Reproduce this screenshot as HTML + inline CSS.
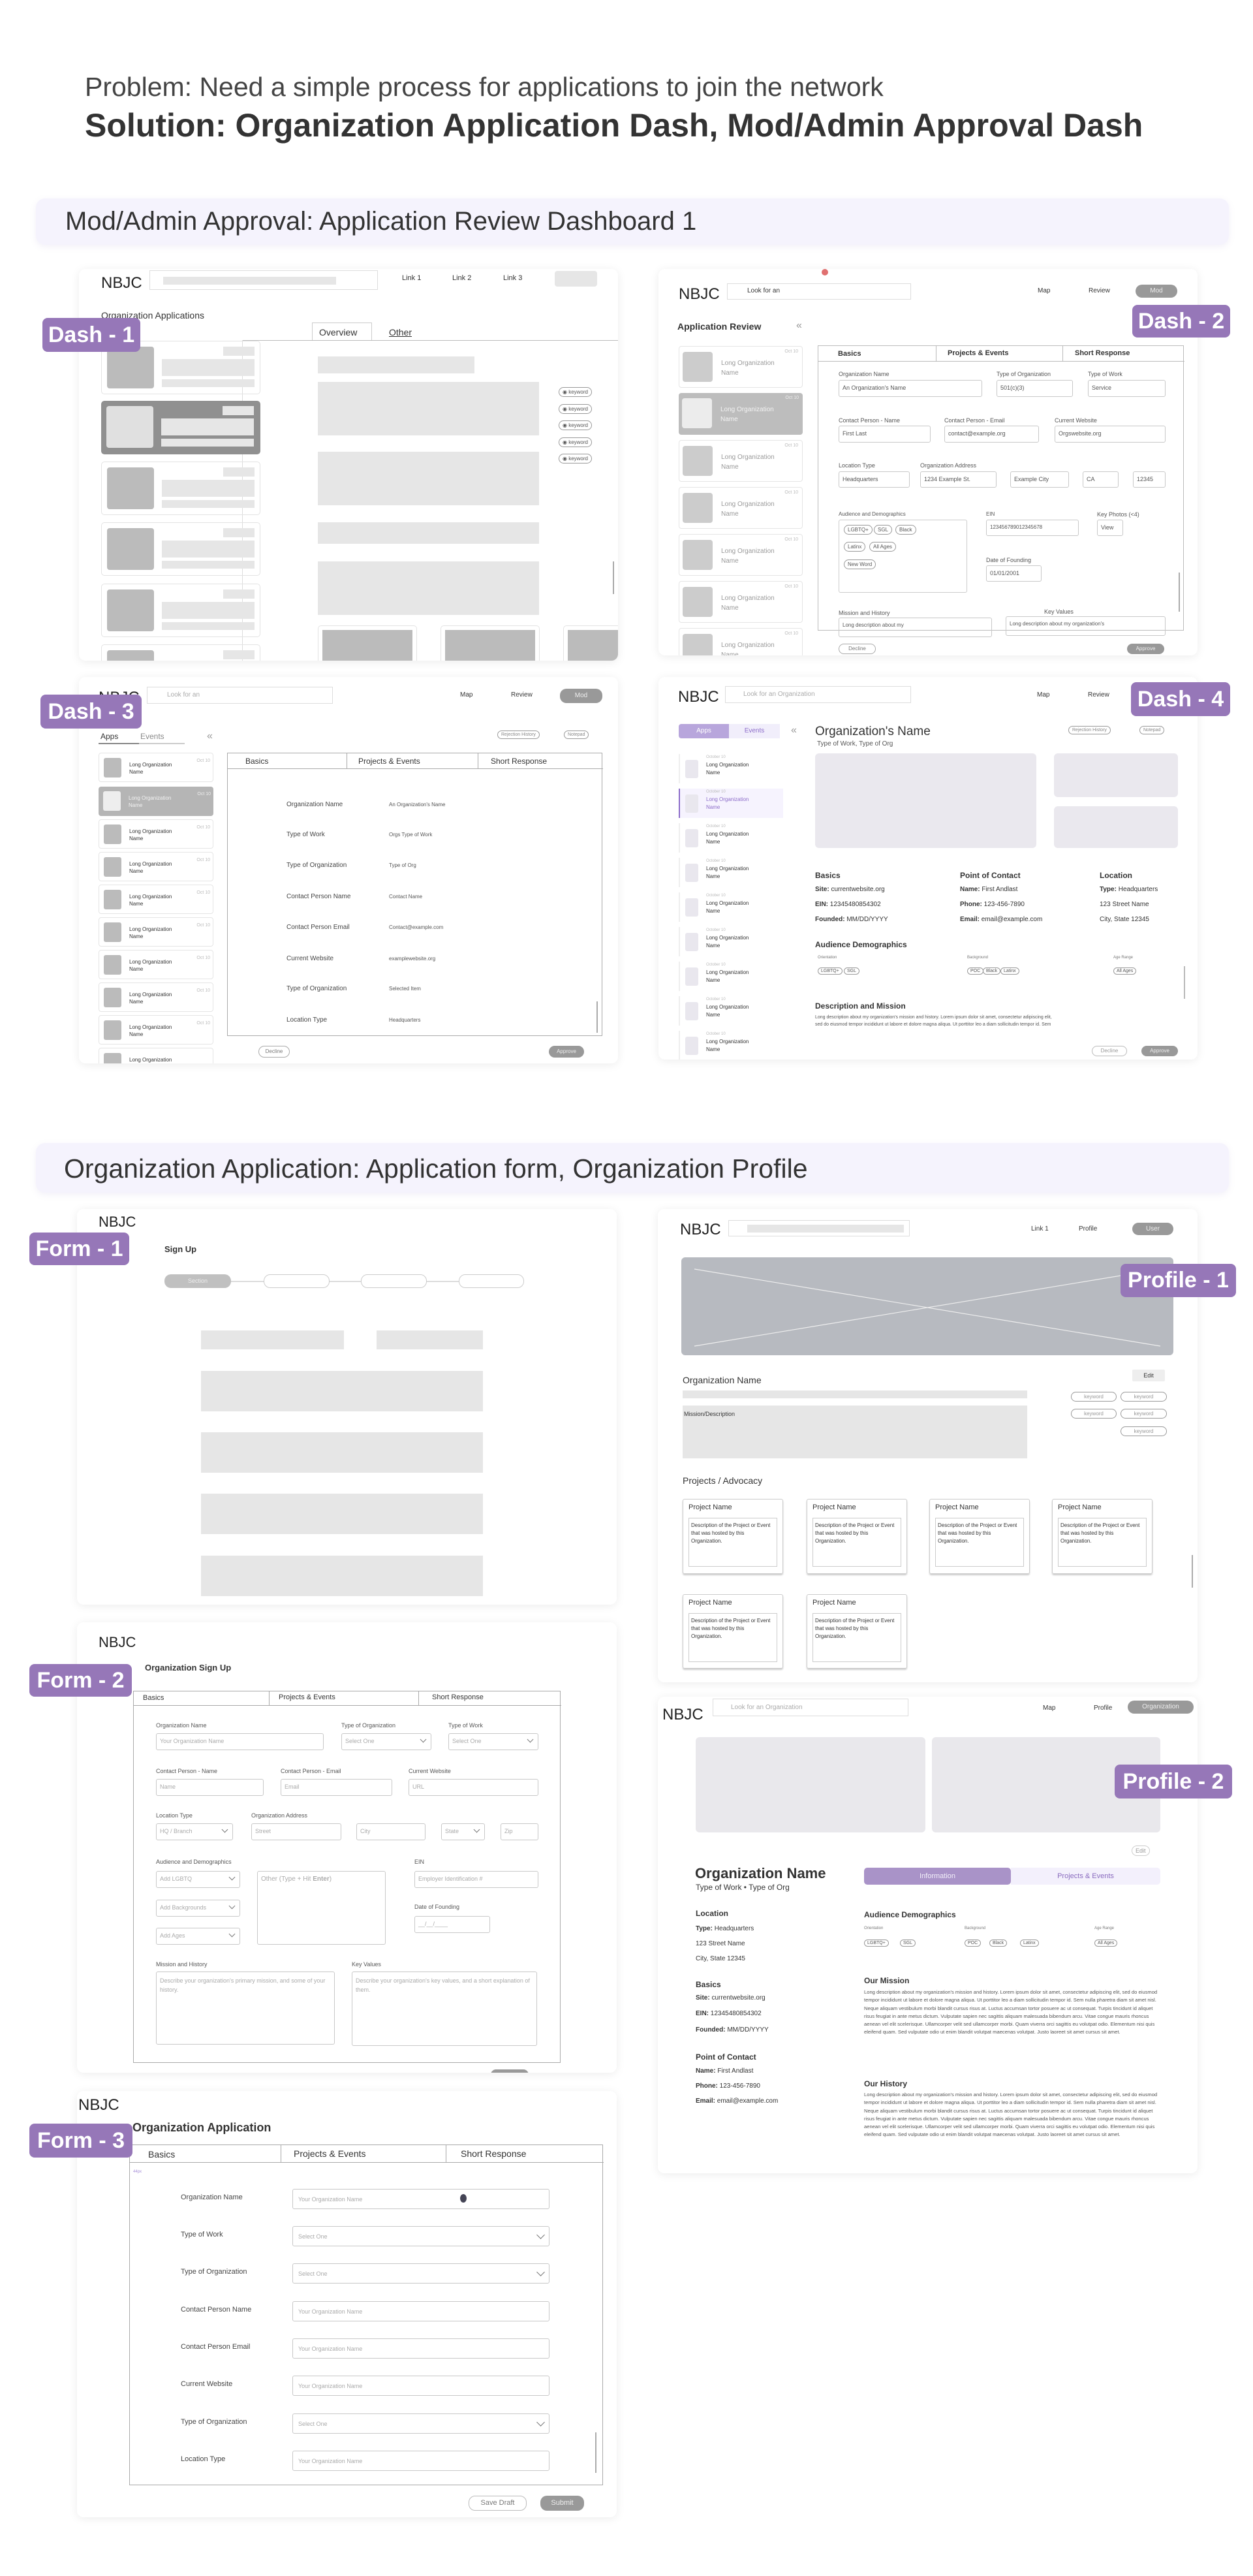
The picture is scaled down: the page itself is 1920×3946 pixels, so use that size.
<!DOCTYPE html>
<html><head><meta charset="utf-8">
<style>
*{box-sizing:border-box;margin:0;padding:0}
body{width:1920px;height:3946px;background:#fff;position:relative;font-family:"Liberation Sans",sans-serif;color:#333;overflow:hidden}
.a{position:absolute}
.card{position:absolute;background:#fff;border-radius:10px;box-shadow:0 2px 14px rgba(0,0,0,.08);overflow:hidden}
.lab{position:absolute;background:#9677b8;color:#fff;font-weight:bold;font-size:34px;border-radius:8px;text-align:center;white-space:nowrap}
.ban{position:absolute;left:55px;width:1828px;background:#f5f3fd;border-radius:14px;box-shadow:0 3px 10px rgba(150,130,200,.12)}
.g{background:#e6e6e6}
.inp{position:absolute;border:1px solid #c8c8c8;border-radius:3px;font-size:9px;color:#aaa;padding:6px 5px;white-space:nowrap;overflow:hidden}
.t{position:absolute;white-space:nowrap}
.pill{position:absolute;border:1px solid #999;border-radius:10px;font-size:9px;color:#555;padding:2px 5px;white-space:nowrap}
.btn{position:absolute;border-radius:10px;font-size:10px;text-align:center;white-space:nowrap}
.nb{position:absolute;font-size:24px;color:#222}
.chev{position:absolute;right:8px;top:5px;width:7px;height:7px;border-right:1px solid #777;border-bottom:1px solid #777;transform:rotate(45deg)}
</style></head><body>

<div class="t" style="left:130px;top:110px;font-size:41px;color:#444">Problem: Need a simple process for applications to join the network</div>
<div class="t" style="left:130px;top:163px;font-size:50px;font-weight:bold;color:#333">Solution: Organization Application Dash, Mod/Admin Approval Dash</div>

<div class="ban" style="top:304px;height:71px"><div class="t" style="left:45px;top:13px;font-size:40px;color:#333">Mod/Admin Approval: Application Review Dashboard 1</div></div>

<!-- DASH 1 -->
<div class="card" style="left:121px;top:412px;width:826px;height:600px">
 <div class="nb" style="left:34px;top:8px">NBJC</div>
 <div class="a" style="left:108px;top:2px;width:350px;height:30px;border:1px solid #ddd"><div class="a g" style="left:20px;top:9px;width:265px;height:12px"></div></div>
 <div class="t" style="left:495px;top:8px;font-size:11px">Link 1</div><div class="t" style="left:572px;top:8px;font-size:11px">Link 2</div><div class="t" style="left:650px;top:8px;font-size:11px">Link 3</div>
 <div class="a g" style="left:729px;top:3px;width:65px;height:24px;border-radius:4px"></div>
 <div class="t" style="left:34px;top:63px;font-size:14px">Organization Applications</div>
 <div class="a" style="left:357px;top:82px;width:92px;height:28px;border:1px solid #ccc;border-bottom:none;font-size:14px;padding:6px 10px">Overview</div>
 <div class="t" style="left:475px;top:89px;font-size:14px;text-decoration:underline">Other</div>
 <div class="a" style="left:250px;top:109px;width:580px;border-top:1px solid #bbb"></div>
 <div class="a" style="left:250px;top:109px;height:500px;border-left:1px solid #ddd"></div>
 <div class="a" style="left:34px;top:110px;width:244px;height:82px;border:1px solid #e3e3e3;border-radius:5px"><div class="a" style="left:8px;top:8px;width:72px;height:64px;background:#bbb;border-radius:4px"></div><div class="a g" style="left:186px;top:8px;width:48px;height:14px"></div><div class="a g" style="left:92px;top:27px;width:142px;height:26px"></div><div class="a g" style="left:92px;top:58px;width:142px;height:12px"></div></div>
 <div class="a" style="left:34px;top:202px;width:244px;height:82px;background:#909090;border-radius:5px"><div class="a" style="left:8px;top:8px;width:72px;height:64px;background:#e0e0e0;border-radius:4px"></div><div class="a" style="left:186px;top:8px;width:48px;height:14px;background:#e6e6e6"></div><div class="a" style="left:92px;top:27px;width:142px;height:26px;background:#e6e6e6"></div><div class="a" style="left:92px;top:58px;width:142px;height:12px;background:#e6e6e6"></div></div>
 <div class="a" style="left:34px;top:295px;width:244px;height:82px;border:1px solid #e3e3e3;border-radius:5px"><div class="a" style="left:8px;top:8px;width:72px;height:64px;background:#bbb;border-radius:4px"></div><div class="a g" style="left:186px;top:8px;width:48px;height:14px"></div><div class="a g" style="left:92px;top:27px;width:142px;height:26px"></div><div class="a g" style="left:92px;top:58px;width:142px;height:12px"></div></div>
 <div class="a" style="left:34px;top:388px;width:244px;height:82px;border:1px solid #e3e3e3;border-radius:5px"><div class="a" style="left:8px;top:8px;width:72px;height:64px;background:#bbb;border-radius:4px"></div><div class="a g" style="left:186px;top:8px;width:48px;height:14px"></div><div class="a g" style="left:92px;top:27px;width:142px;height:26px"></div><div class="a g" style="left:92px;top:58px;width:142px;height:12px"></div></div>
 <div class="a" style="left:34px;top:482px;width:244px;height:82px;border:1px solid #e3e3e3;border-radius:5px"><div class="a" style="left:8px;top:8px;width:72px;height:64px;background:#bbb;border-radius:4px"></div><div class="a g" style="left:186px;top:8px;width:48px;height:14px"></div><div class="a g" style="left:92px;top:27px;width:142px;height:26px"></div><div class="a g" style="left:92px;top:58px;width:142px;height:12px"></div></div>
 <div class="a" style="left:34px;top:575px;width:244px;height:82px;border:1px solid #e3e3e3;border-radius:5px"><div class="a" style="left:8px;top:8px;width:72px;height:64px;background:#bbb;border-radius:4px"></div><div class="a g" style="left:186px;top:8px;width:48px;height:14px"></div></div>
 <div class="a g" style="left:366px;top:134px;width:240px;height:26px"></div>
 <div class="a g" style="left:366px;top:173px;width:339px;height:82px"></div>
 <div class="a g" style="left:366px;top:280px;width:339px;height:82px"></div>
 <div class="a g" style="left:366px;top:388px;width:339px;height:33px"></div>
 <div class="a g" style="left:366px;top:448px;width:339px;height:82px"></div>
 <div class="a" style="left:366px;top:546px;width:152px;height:70px;border:1px solid #e3e3e3;border-radius:5px"><div class="a" style="left:6px;top:6px;width:138px;height:60px;background:#bbb"></div></div>
 <div class="a" style="left:554px;top:546px;width:152px;height:70px;border:1px solid #e3e3e3;border-radius:5px"><div class="a" style="left:6px;top:6px;width:138px;height:60px;background:#bbb"></div></div>
 <div class="a" style="left:742px;top:546px;width:152px;height:70px;border:1px solid #e3e3e3;border-radius:5px"><div class="a" style="left:6px;top:6px;width:138px;height:60px;background:#bbb"></div></div>
 <div class="pill" style="left:735px;top:181px;font-size:8px">◉ keyword</div>
 <div class="pill" style="left:735px;top:207px;font-size:8px">◉ keyword</div>
 <div class="pill" style="left:735px;top:232px;font-size:8px">◉ keyword</div>
 <div class="pill" style="left:735px;top:258px;font-size:8px">◉ keyword</div>
 <div class="pill" style="left:735px;top:283px;font-size:8px">◉ keyword</div>
 <div class="a" style="left:818px;top:448px;width:2px;height:50px;background:#aaa"></div>
</div>
<div class="lab" style="left:65px;top:487px;width:150px;height:52px;line-height:52px">Dash - 1</div>

<!-- DASH 2 -->
<div class="card" style="left:1009px;top:412px;width:826px;height:592px">
 <div class="nb" style="left:31px;top:25px">NBJC</div>
 <div class="a" style="left:105px;top:22px;width:282px;height:25px;border:1px solid #ddd;font-size:10px;padding:5px 30px">Look for an</div>
 <div class="a" style="left:250px;top:0px;width:10px;height:10px;border-radius:50%;background:#e07070"></div>
 <div class="t" style="left:581px;top:28px;font-size:10px">Map</div><div class="t" style="left:659px;top:28px;font-size:10px">Review</div>
 <div class="btn" style="left:731px;top:24px;width:64px;height:20px;background:#999;color:#eee;line-height:20px">Mod</div>
 <div class="t" style="left:29px;top:80px;font-size:14px;font-weight:bold">Application Review</div>
 <div class="t" style="left:211px;top:78px;font-size:16px;color:#999">«</div>
 <div class="a" style="left:31px;top:118px;width:190px;height:64px;border:1px solid #e5e5e5;border-radius:4px"><div class="a" style="left:5px;top:8px;width:46px;height:46px;background:#ccc;border-radius:4px"></div><div class="t" style="left:64px;top:18px;font-size:10px;color:#999;line-height:15px">Long Organization<br>Name</div><div class="t" style="right:6px;top:4px;font-size:7px;color:#bbb">Oct 10</div></div>
 <div class="a" style="left:31px;top:190px;width:190px;height:64px;background:#bdbdbd;border-radius:4px"><div class="a" style="left:5px;top:8px;width:46px;height:46px;background:#ececec;border-radius:4px"></div><div class="t" style="left:64px;top:18px;font-size:10px;color:#f3f3f3;line-height:15px">Long Organization<br>Name</div><div class="t" style="right:6px;top:4px;font-size:7px;color:#eee">Oct 10</div></div>
 <div class="a" style="left:31px;top:262px;width:190px;height:64px;border:1px solid #e5e5e5;border-radius:4px"><div class="a" style="left:5px;top:8px;width:46px;height:46px;background:#ccc;border-radius:4px"></div><div class="t" style="left:64px;top:18px;font-size:10px;color:#999;line-height:15px">Long Organization<br>Name</div><div class="t" style="right:6px;top:4px;font-size:7px;color:#bbb">Oct 10</div></div>
 <div class="a" style="left:31px;top:334px;width:190px;height:64px;border:1px solid #e5e5e5;border-radius:4px"><div class="a" style="left:5px;top:8px;width:46px;height:46px;background:#ccc;border-radius:4px"></div><div class="t" style="left:64px;top:18px;font-size:10px;color:#999;line-height:15px">Long Organization<br>Name</div><div class="t" style="right:6px;top:4px;font-size:7px;color:#bbb">Oct 10</div></div>
 <div class="a" style="left:31px;top:406px;width:190px;height:64px;border:1px solid #e5e5e5;border-radius:4px"><div class="a" style="left:5px;top:8px;width:46px;height:46px;background:#ccc;border-radius:4px"></div><div class="t" style="left:64px;top:18px;font-size:10px;color:#999;line-height:15px">Long Organization<br>Name</div><div class="t" style="right:6px;top:4px;font-size:7px;color:#bbb">Oct 10</div></div>
 <div class="a" style="left:31px;top:478px;width:190px;height:64px;border:1px solid #e5e5e5;border-radius:4px"><div class="a" style="left:5px;top:8px;width:46px;height:46px;background:#ccc;border-radius:4px"></div><div class="t" style="left:64px;top:18px;font-size:10px;color:#999;line-height:15px">Long Organization<br>Name</div><div class="t" style="right:6px;top:4px;font-size:7px;color:#bbb">Oct 10</div></div>
 <div class="a" style="left:31px;top:550px;width:190px;height:64px;border:1px solid #e5e5e5;border-radius:4px"><div class="a" style="left:5px;top:8px;width:46px;height:46px;background:#ccc;border-radius:4px"></div><div class="t" style="left:64px;top:18px;font-size:10px;color:#999;line-height:15px">Long Organization<br>Name</div><div class="t" style="right:6px;top:4px;font-size:7px;color:#bbb">Oct 10</div></div>
 <div class="a" style="left:244px;top:117px;width:561px;height:437px;border:1px solid #bbb">
  <div class="a" style="left:0;top:0;width:561px;height:24px;border-bottom:1px solid #bbb"></div>
  <div class="a" style="left:180px;top:0;height:24px;border-left:1px solid #bbb"></div>
  <div class="a" style="left:374px;top:0;height:24px;border-left:1px solid #bbb"></div>
  <div class="t" style="left:30px;top:6px;font-size:11px;font-weight:bold">Basics</div>
  <div class="t" style="left:198px;top:5px;font-size:11px;font-weight:bold">Projects &amp; Events</div>
  <div class="t" style="left:393px;top:5px;font-size:11px;font-weight:bold">Short Response</div>
 </div>
 <div class="t" style="left:276px;top:156px;font-size:9px;color:#555">Organization Name</div>
 <div class="t" style="left:518px;top:156px;font-size:9px;color:#555">Type of Organization</div>
 <div class="t" style="left:658px;top:156px;font-size:9px;color:#555">Type of Work</div>
 <div class="inp" style="left:276px;top:170px;width:220px;height:26px;color:#555">An Organization's Name</div>
 <div class="inp" style="left:518px;top:170px;width:117px;height:26px;color:#555">501(c)(3)</div>
 <div class="inp" style="left:658px;top:170px;width:119px;height:26px;color:#555">Service</div>
 <div class="t" style="left:276px;top:227px;font-size:9px;color:#555">Contact Person - Name</div>
 <div class="t" style="left:438px;top:227px;font-size:9px;color:#555">Contact Person - Email</div>
 <div class="t" style="left:607px;top:227px;font-size:9px;color:#555">Current Website</div>
 <div class="inp" style="left:276px;top:240px;width:141px;height:26px;color:#555">First Last</div>
 <div class="inp" style="left:438px;top:240px;width:145px;height:26px;color:#555">contact@example.org</div>
 <div class="inp" style="left:607px;top:240px;width:170px;height:26px;color:#555">Orgswebsite.org</div>
 <div class="t" style="left:276px;top:296px;font-size:9px;color:#555">Location Type</div>
 <div class="t" style="left:401px;top:296px;font-size:9px;color:#555">Organization Address</div>
 <div class="inp" style="left:276px;top:310px;width:109px;height:25px;color:#555">Headquarters</div>
 <div class="inp" style="left:401px;top:310px;width:117px;height:25px;color:#555">1234 Example St.</div>
 <div class="inp" style="left:539px;top:310px;width:90px;height:25px;color:#555">Example City</div>
 <div class="inp" style="left:650px;top:310px;width:55px;height:25px;color:#555">CA</div>
 <div class="inp" style="left:727px;top:310px;width:50px;height:25px;color:#555">12345</div>
 <div class="t" style="left:276px;top:371px;font-size:8px;color:#555">Audience and Demographics</div>
 <div class="t" style="left:502px;top:371px;font-size:8px;color:#555">EIN</div>
 <div class="t" style="left:672px;top:371px;font-size:9px;color:#555">Key Photos (&lt;4)</div>
 <div class="a" style="left:276px;top:384px;width:197px;height:112px;border:1px solid #ccc;border-radius:3px"></div>
 <div class="pill" style="left:284px;top:392px;font-size:8px">LGBTQ+</div><div class="pill" style="left:330px;top:392px;font-size:8px">SGL</div><div class="pill" style="left:363px;top:392px;font-size:8px">Black</div>
 <div class="pill" style="left:284px;top:418px;font-size:8px">Latinx</div><div class="pill" style="left:323px;top:418px;font-size:8px">All Ages</div>
 <div class="pill" style="left:284px;top:445px;font-size:8px">New Word</div>
 <div class="inp" style="left:502px;top:384px;width:142px;height:25px;color:#555;font-size:8px">123456789012345678</div>
 <div class="inp" style="left:672px;top:384px;width:40px;height:25px;color:#555">View</div>
 <div class="t" style="left:502px;top:441px;font-size:9px;color:#555">Date of Founding</div>
 <div class="inp" style="left:502px;top:454px;width:85px;height:25px;color:#555">01/01/2001</div>
 <div class="t" style="left:276px;top:522px;font-size:9px;color:#555">Mission and History</div>
 <div class="t" style="left:591px;top:520px;font-size:9px;color:#555">Key Values</div>
 <div class="inp" style="left:276px;top:534px;width:235px;height:30px;color:#555;font-size:8px">Long description about my</div>
 <div class="inp" style="left:532px;top:532px;width:245px;height:30px;color:#555;font-size:8px">Long description about my organization's</div>
 <div class="a" style="left:797px;top:465px;width:2px;height:60px;background:#aaa"></div>
 <div class="btn" style="left:276px;top:574px;width:57px;height:16px;border:1px solid #aaa;font-size:8px;color:#777;line-height:14px">Decline</div>
 <div class="btn" style="left:718px;top:574px;width:57px;height:16px;background:#999;color:#eee;font-size:8px;line-height:16px">Approve</div>
</div>
<div class="lab" style="left:1735px;top:467px;width:150px;height:50px;line-height:50px">Dash - 2</div>

<!-- DASH 3 -->
<div class="card" style="left:121px;top:1037px;width:826px;height:592px">
 <div class="nb" style="left:30px;top:18px">NBJC</div>
 <div class="a" style="left:104px;top:15px;width:285px;height:26px;border:1px solid #ddd;font-size:10px;color:#aaa;padding:6px 30px">Look for an</div>
 <div class="t" style="left:584px;top:22px;font-size:10px">Map</div><div class="t" style="left:662px;top:22px;font-size:10px">Review</div>
 <div class="btn" style="left:737px;top:18px;width:65px;height:22px;background:#999;color:#eee;line-height:22px">Mod</div>
 <div class="t" style="left:33px;top:84px;font-size:12px">Apps</div><div class="t" style="left:94px;top:84px;font-size:12px;color:#888">Events</div>
 <div class="a" style="left:30px;top:101px;width:132px;border-top:2px solid #ccc"></div><div class="a" style="left:30px;top:101px;width:62px;border-top:2px solid #888"></div>
 <div class="t" style="left:196px;top:82px;font-size:16px;color:#999">«</div>
 <div class="pill" style="left:641px;top:82px;font-size:7px;color:#888">Rejection History</div>
 <div class="pill" style="left:743px;top:82px;font-size:7px;color:#888">Notepad</div>
 <div class="a" style="left:30px;top:116px;width:176px;height:45px;border:1px solid #e5e5e5;border-radius:4px"><div class="a" style="left:7px;top:7px;width:27px;height:30px;background:#bbb;border-radius:3px"></div><div class="t" style="left:46px;top:12px;font-size:8px;line-height:11px">Long Organization<br>Name</div><div class="t" style="right:4px;top:8px;font-size:7px;color:#bbb">Oct 10</div></div>
 <div class="a" style="left:30px;top:168px;width:176px;height:45px;background:#b5b5b5;border-radius:4px"><div class="a" style="left:7px;top:7px;width:27px;height:30px;background:#eee;border-radius:3px"></div><div class="t" style="left:46px;top:12px;font-size:8px;line-height:11px;color:#f3f3f3">Long Organization<br>Name</div><div class="t" style="right:4px;top:8px;font-size:7px;color:#eee">Oct 10</div></div>
 <div class="a" style="left:30px;top:218px;width:176px;height:45px;border:1px solid #e5e5e5;border-radius:4px"><div class="a" style="left:7px;top:7px;width:27px;height:30px;background:#bbb;border-radius:3px"></div><div class="t" style="left:46px;top:12px;font-size:8px;line-height:11px">Long Organization<br>Name</div><div class="t" style="right:4px;top:8px;font-size:7px;color:#bbb">Oct 10</div></div>
 <div class="a" style="left:30px;top:268px;width:176px;height:45px;border:1px solid #e5e5e5;border-radius:4px"><div class="a" style="left:7px;top:7px;width:27px;height:30px;background:#bbb;border-radius:3px"></div><div class="t" style="left:46px;top:12px;font-size:8px;line-height:11px">Long Organization<br>Name</div><div class="t" style="right:4px;top:8px;font-size:7px;color:#bbb">Oct 10</div></div>
 <div class="a" style="left:30px;top:318px;width:176px;height:45px;border:1px solid #e5e5e5;border-radius:4px"><div class="a" style="left:7px;top:7px;width:27px;height:30px;background:#bbb;border-radius:3px"></div><div class="t" style="left:46px;top:12px;font-size:8px;line-height:11px">Long Organization<br>Name</div><div class="t" style="right:4px;top:8px;font-size:7px;color:#bbb">Oct 10</div></div>
 <div class="a" style="left:30px;top:368px;width:176px;height:45px;border:1px solid #e5e5e5;border-radius:4px"><div class="a" style="left:7px;top:7px;width:27px;height:30px;background:#bbb;border-radius:3px"></div><div class="t" style="left:46px;top:12px;font-size:8px;line-height:11px">Long Organization<br>Name</div><div class="t" style="right:4px;top:8px;font-size:7px;color:#bbb">Oct 10</div></div>
 <div class="a" style="left:30px;top:418px;width:176px;height:45px;border:1px solid #e5e5e5;border-radius:4px"><div class="a" style="left:7px;top:7px;width:27px;height:30px;background:#bbb;border-radius:3px"></div><div class="t" style="left:46px;top:12px;font-size:8px;line-height:11px">Long Organization<br>Name</div><div class="t" style="right:4px;top:8px;font-size:7px;color:#bbb">Oct 10</div></div>
 <div class="a" style="left:30px;top:468px;width:176px;height:45px;border:1px solid #e5e5e5;border-radius:4px"><div class="a" style="left:7px;top:7px;width:27px;height:30px;background:#bbb;border-radius:3px"></div><div class="t" style="left:46px;top:12px;font-size:8px;line-height:11px">Long Organization<br>Name</div><div class="t" style="right:4px;top:8px;font-size:7px;color:#bbb">Oct 10</div></div>
 <div class="a" style="left:30px;top:518px;width:176px;height:45px;border:1px solid #e5e5e5;border-radius:4px"><div class="a" style="left:7px;top:7px;width:27px;height:30px;background:#bbb;border-radius:3px"></div><div class="t" style="left:46px;top:12px;font-size:8px;line-height:11px">Long Organization<br>Name</div><div class="t" style="right:4px;top:8px;font-size:7px;color:#bbb">Oct 10</div></div>
 <div class="a" style="left:30px;top:568px;width:176px;height:45px;border:1px solid #e5e5e5;border-radius:4px"><div class="a" style="left:7px;top:7px;width:27px;height:30px;background:#bbb;border-radius:3px"></div><div class="t" style="left:46px;top:12px;font-size:8px;line-height:11px">Long Organization<br>Name</div></div>
 <div class="a" style="left:227px;top:116px;width:575px;height:434px;border:1px solid #aaa">
  <div class="a" style="left:0;top:0;width:575px;height:24px;border-bottom:1px solid #aaa"></div>
  <div class="a" style="left:182px;top:0;height:24px;border-left:1px solid #aaa"></div>
  <div class="a" style="left:383px;top:0;height:24px;border-left:1px solid #aaa"></div>
  <div class="t" style="left:27px;top:5px;font-size:12px">Basics</div>
  <div class="t" style="left:200px;top:5px;font-size:12px">Projects &amp; Events</div>
  <div class="t" style="left:403px;top:5px;font-size:12px">Short Response</div>
  <div class="a" style="left:565px;top:380px;width:2px;height:48px;background:#aaa"></div>
 </div>
 <div class="t" style="left:318px;top:190px;font-size:10px;color:#444">Organization Name</div><div class="t" style="left:475px;top:191px;font-size:8px;color:#555">An Organization's Name</div>
 <div class="t" style="left:318px;top:236px;font-size:10px;color:#444">Type of Work</div><div class="t" style="left:475px;top:237px;font-size:8px;color:#555">Orgs Type of Work</div>
 <div class="t" style="left:318px;top:283px;font-size:10px;color:#444">Type of Organization</div><div class="t" style="left:475px;top:284px;font-size:8px;color:#555">Type of Org</div>
 <div class="t" style="left:318px;top:331px;font-size:10px;color:#444">Contact Person Name</div><div class="t" style="left:475px;top:332px;font-size:8px;color:#555">Contact Name</div>
 <div class="t" style="left:318px;top:378px;font-size:10px;color:#444">Contact Person Email</div><div class="t" style="left:475px;top:379px;font-size:8px;color:#555">Contact@example.com</div>
 <div class="t" style="left:318px;top:426px;font-size:10px;color:#444">Current Website</div><div class="t" style="left:475px;top:427px;font-size:8px;color:#555">examplewebsite.org</div>
 <div class="t" style="left:318px;top:472px;font-size:10px;color:#444">Type of Organization</div><div class="t" style="left:475px;top:473px;font-size:8px;color:#555">Selected Item</div>
 <div class="t" style="left:318px;top:520px;font-size:10px;color:#444">Location Type</div><div class="t" style="left:475px;top:521px;font-size:8px;color:#555">Headquarters</div>
 <div class="btn" style="left:275px;top:565px;width:48px;height:18px;border:1px solid #aaa;font-size:8px;color:#777;line-height:16px">Decline</div>
 <div class="btn" style="left:720px;top:565px;width:54px;height:18px;background:#999;color:#eee;font-size:8px;line-height:18px">Approve</div>
</div>
<div class="lab" style="left:62px;top:1064px;width:155px;height:52px;line-height:52px">Dash - 3</div>

<!-- DASH 4 -->
<div class="card" style="left:1009px;top:1037px;width:826px;height:586px">
 <div class="nb" style="left:30px;top:17px">NBJC</div>
 <div class="a" style="left:102px;top:14px;width:285px;height:26px;border:1px solid #ddd;font-size:10px;color:#aaa;padding:6px 27px">Look for an Organization</div>
 <div class="t" style="left:580px;top:22px;font-size:10px">Map</div><div class="t" style="left:658px;top:22px;font-size:10px">Review</div>
 <div class="a" style="left:31px;top:72px;width:77px;height:22px;background:#b8a6dc;border-radius:4px 0 0 4px;color:#fff;font-size:10px;text-align:center;line-height:22px">Apps</div>
 <div class="a" style="left:108px;top:72px;width:78px;height:22px;background:#f1eefb;color:#8c6cc9;font-size:10px;text-align:center;line-height:22px">Events</div>
 <div class="t" style="left:203px;top:73px;font-size:16px;color:#999">«</div>
 <div class="t" style="left:240px;top:73px;font-size:19px;color:#333">Organization's Name</div>
 <div class="t" style="left:243px;top:97px;font-size:10px;color:#555">Type of Work, Type of Org</div>
 <div class="pill" style="left:628px;top:75px;font-size:7px;color:#888">Rejection History</div>
 <div class="pill" style="left:737px;top:75px;font-size:7px;color:#888">Notepad</div>
 <div class="a" style="left:31px;top:118px;width:160px;height:45px;border-left:2px solid #eee"><div class="a" style="left:8px;top:9px;width:20px;height:28px;background:#e9e7ee;border-radius:3px"></div><div class="t" style="left:40px;top:2px;font-size:6px;color:#bbb">October 10</div><div class="t" style="left:40px;top:11px;font-size:8px;line-height:12px">Long Organization<br>Name</div></div>
 <div class="a" style="left:31px;top:171px;width:160px;height:45px;border-left:2px solid #8c6cc9;background:#f6f3fe"><div class="a" style="left:8px;top:9px;width:20px;height:28px;background:#e9e7ee;border-radius:3px"></div><div class="t" style="left:40px;top:2px;font-size:6px;color:#bbb">October 10</div><div class="t" style="left:40px;top:11px;font-size:8px;line-height:12px;color:#8c6cc9">Long Organization<br>Name</div></div>
 <div class="a" style="left:31px;top:224px;width:160px;height:45px;border-left:2px solid #eee"><div class="a" style="left:8px;top:9px;width:20px;height:28px;background:#e9e7ee;border-radius:3px"></div><div class="t" style="left:40px;top:2px;font-size:6px;color:#bbb">October 10</div><div class="t" style="left:40px;top:11px;font-size:8px;line-height:12px">Long Organization<br>Name</div></div>
 <div class="a" style="left:31px;top:277px;width:160px;height:45px;border-left:2px solid #eee"><div class="a" style="left:8px;top:9px;width:20px;height:28px;background:#e9e7ee;border-radius:3px"></div><div class="t" style="left:40px;top:2px;font-size:6px;color:#bbb">October 10</div><div class="t" style="left:40px;top:11px;font-size:8px;line-height:12px">Long Organization<br>Name</div></div>
 <div class="a" style="left:31px;top:330px;width:160px;height:45px;border-left:2px solid #eee"><div class="a" style="left:8px;top:9px;width:20px;height:28px;background:#e9e7ee;border-radius:3px"></div><div class="t" style="left:40px;top:2px;font-size:6px;color:#bbb">October 10</div><div class="t" style="left:40px;top:11px;font-size:8px;line-height:12px">Long Organization<br>Name</div></div>
 <div class="a" style="left:31px;top:383px;width:160px;height:45px;border-left:2px solid #eee"><div class="a" style="left:8px;top:9px;width:20px;height:28px;background:#e9e7ee;border-radius:3px"></div><div class="t" style="left:40px;top:2px;font-size:6px;color:#bbb">October 10</div><div class="t" style="left:40px;top:11px;font-size:8px;line-height:12px">Long Organization<br>Name</div></div>
 <div class="a" style="left:31px;top:436px;width:160px;height:45px;border-left:2px solid #eee"><div class="a" style="left:8px;top:9px;width:20px;height:28px;background:#e9e7ee;border-radius:3px"></div><div class="t" style="left:40px;top:2px;font-size:6px;color:#bbb">October 10</div><div class="t" style="left:40px;top:11px;font-size:8px;line-height:12px">Long Organization<br>Name</div></div>
 <div class="a" style="left:31px;top:489px;width:160px;height:45px;border-left:2px solid #eee"><div class="a" style="left:8px;top:9px;width:20px;height:28px;background:#e9e7ee;border-radius:3px"></div><div class="t" style="left:40px;top:2px;font-size:6px;color:#bbb">October 10</div><div class="t" style="left:40px;top:11px;font-size:8px;line-height:12px">Long Organization<br>Name</div></div>
 <div class="a" style="left:31px;top:542px;width:160px;height:45px;border-left:2px solid #eee"><div class="a" style="left:8px;top:9px;width:20px;height:28px;background:#e9e7ee;border-radius:3px"></div><div class="t" style="left:40px;top:2px;font-size:6px;color:#bbb">October 10</div><div class="t" style="left:40px;top:11px;font-size:8px;line-height:12px">Long Organization<br>Name</div></div>
 <div class="a" style="left:240px;top:117px;width:339px;height:145px;background:#eae8ee;border-radius:6px"></div>
 <div class="a" style="left:606px;top:117px;width:190px;height:67px;background:#eae8ee;border-radius:6px"></div>
 <div class="a" style="left:606px;top:198px;width:190px;height:64px;background:#eae8ee;border-radius:6px"></div>
 <div class="t" style="left:240px;top:297px;font-size:12px;font-weight:bold">Basics</div>
 <div class="t" style="left:462px;top:297px;font-size:12px;font-weight:bold">Point of Contact</div>
 <div class="t" style="left:676px;top:297px;font-size:12px;font-weight:bold">Location</div>
 <div class="t" style="left:240px;top:320px;font-size:10px"><b>Site:</b> currentwebsite.org</div>
 <div class="t" style="left:240px;top:343px;font-size:10px"><b>EIN:</b> 12345480854302</div>
 <div class="t" style="left:240px;top:366px;font-size:10px"><b>Founded:</b> MM/DD/YYYY</div>
 <div class="t" style="left:462px;top:320px;font-size:10px"><b>Name:</b> First Andlast</div>
 <div class="t" style="left:462px;top:343px;font-size:10px"><b>Phone:</b> 123-456-7890</div>
 <div class="t" style="left:462px;top:366px;font-size:10px"><b>Email:</b> email@example.com</div>
 <div class="t" style="left:676px;top:320px;font-size:10px"><b>Type:</b> Headquarters</div>
 <div class="t" style="left:676px;top:343px;font-size:10px">123 Street Name</div>
 <div class="t" style="left:676px;top:366px;font-size:10px">City, State 12345</div>
 <div class="t" style="left:240px;top:403px;font-size:12px;font-weight:bold">Audience Demographics</div>
 <div class="t" style="left:244px;top:427px;font-size:6px;color:#777">Orientation</div>
 <div class="t" style="left:473px;top:427px;font-size:6px;color:#777">Background</div>
 <div class="t" style="left:697px;top:427px;font-size:6px;color:#777">Age Range</div>
 <div class="pill" style="left:244px;top:445px;font-size:7px;padding:1px 4px">LGBTQ+</div><div class="pill" style="left:284px;top:445px;font-size:7px;padding:1px 4px">SGL</div>
 <div class="pill" style="left:473px;top:445px;font-size:7px;padding:1px 4px">POC</div><div class="pill" style="left:497px;top:445px;font-size:7px;padding:1px 4px">Black</div><div class="pill" style="left:524px;top:445px;font-size:7px;padding:1px 4px">Latinx</div>
 <div class="pill" style="left:697px;top:445px;font-size:7px;padding:1px 4px">All Ages</div>
 <div class="t" style="left:240px;top:497px;font-size:12px;font-weight:bold">Description and Mission</div>
 <div class="t" style="left:240px;top:516px;font-size:7px;color:#555;line-height:11px">Long description about my organization's mission and history. Lorem ipsum dolor sit amet, consectetur adipiscing elit,<br>sed do eiusmod tempor incididunt ut labore et dolore magna aliqua. Ut porttitor leo a diam sollicitudin tempor id. Sem</div>
 <div class="a" style="left:805px;top:443px;width:2px;height:50px;background:#bbb"></div>
 <div class="btn" style="left:664px;top:565px;width:54px;height:16px;border:1px solid #bbb;font-size:8px;color:#999;line-height:14px">Decline</div>
 <div class="btn" style="left:740px;top:565px;width:56px;height:16px;background:#999;color:#eee;font-size:8px;line-height:16px">Approve</div>
</div>
<div class="lab" style="left:1733px;top:1045px;width:152px;height:52px;line-height:52px">Dash - 4</div>

<div class="ban" style="top:1751px;height:76px"><div class="t" style="left:43px;top:16px;font-size:41px;color:#333">Organization Application: Application form, Organization Profile</div></div>

<!-- FORM 1 -->
<div class="card" style="left:118px;top:1852px;width:827px;height:606px">
 <div class="nb" style="left:33px;top:7px;font-size:22px">NBJC</div>
 <div class="t" style="left:134px;top:54px;font-size:13px;font-weight:bold">Sign Up</div>
 <div class="a" style="left:236px;top:110px;width:350px;border-top:2px solid #ddd"></div>
 <div class="btn" style="left:134px;top:100px;width:102px;height:21px;background:#c0c0c0;color:#eee;line-height:21px;font-size:9px">Section</div>
 <div class="btn" style="left:286px;top:100px;width:101px;height:21px;border:1px solid #ccc;background:#fff"></div>
 <div class="btn" style="left:435px;top:100px;width:101px;height:21px;border:1px solid #ccc;background:#fff"></div>
 <div class="btn" style="left:585px;top:100px;width:100px;height:21px;border:1px solid #ccc;background:#fff"></div>
 <div class="a g" style="left:190px;top:186px;width:219px;height:29px"></div>
 <div class="a g" style="left:459px;top:186px;width:163px;height:29px"></div>
 <div class="a g" style="left:190px;top:248px;width:432px;height:62px"></div>
 <div class="a g" style="left:190px;top:342px;width:432px;height:62px"></div>
 <div class="a g" style="left:190px;top:436px;width:432px;height:62px"></div>
 <div class="a g" style="left:190px;top:531px;width:432px;height:62px"></div>
</div>
<div class="lab" style="left:45px;top:1888px;width:153px;height:50px;line-height:50px">Form - 1</div>

<!-- PROFILE 1 -->
<div class="card" style="left:1008px;top:1852px;width:827px;height:725px">
 <div class="nb" style="left:34px;top:18px">NBJC</div>
 <div class="a" style="left:108px;top:17px;width:278px;height:25px;border:1px solid #ddd"><div class="a g" style="left:28px;top:6px;width:240px;height:12px"></div></div>
 <div class="t" style="left:572px;top:25px;font-size:10px">Link 1</div><div class="t" style="left:645px;top:25px;font-size:10px">Profile</div>
 <div class="btn" style="left:727px;top:21px;width:63px;height:19px;background:#999;color:#eee;line-height:19px">User</div>
 <svg class="a" style="left:36px;top:74px" width="754" height="150"><rect width="754" height="150" rx="6" fill="#b7bac0"/><line x1="20" y1="18" x2="734" y2="136" stroke="#eee" stroke-width="1.2"/><line x1="20" y1="136" x2="734" y2="18" stroke="#eee" stroke-width="1.2"/></svg>
 <div class="t" style="left:38px;top:254px;font-size:14px">Organization Name</div>
 <div class="btn" style="left:727px;top:246px;width:50px;height:18px;background:#eee;font-size:9px;line-height:18px;border-radius:2px">Edit</div>
 <div class="a g" style="left:38px;top:278px;width:528px;height:12px"></div>
 <div class="a g" style="left:38px;top:301px;width:528px;height:81px"><div class="t" style="left:2px;top:8px;font-size:9px">Mission/Description</div></div>
 <div class="pill" style="left:633px;top:280px;font-size:8px;color:#999;width:70px;text-align:center">keyword</div><div class="pill" style="left:709px;top:280px;font-size:8px;color:#999;width:71px;text-align:center">keyword</div>
 <div class="pill" style="left:633px;top:306px;font-size:8px;color:#999;width:70px;text-align:center">keyword</div><div class="pill" style="left:709px;top:306px;font-size:8px;color:#999;width:71px;text-align:center">keyword</div>
 <div class="pill" style="left:709px;top:333px;font-size:8px;color:#999;width:71px;text-align:center">keyword</div>
 <div class="t" style="left:38px;top:408px;font-size:14px">Projects / Advocacy</div>
 <div class="a" style="left:38px;top:444px;width:154px;height:115px;border:1px solid #ccc;border-radius:3px;box-shadow:0 2px 2px #ccc"><div class="t" style="left:8px;top:6px;font-size:11px">Project Name</div><div class="a" style="left:8px;top:28px;width:136px;height:75px;border:1px solid #ccc;font-size:8px;line-height:12px;padding:5px 3px">Description of the Project or Event that was hosted by this Organization.</div></div>
 <div class="a" style="left:228px;top:444px;width:154px;height:115px;border:1px solid #ccc;border-radius:3px;box-shadow:0 2px 2px #ccc"><div class="t" style="left:8px;top:6px;font-size:11px">Project Name</div><div class="a" style="left:8px;top:28px;width:136px;height:75px;border:1px solid #ccc;font-size:8px;line-height:12px;padding:5px 3px">Description of the Project or Event that was hosted by this Organization.</div></div>
 <div class="a" style="left:416px;top:444px;width:154px;height:115px;border:1px solid #ccc;border-radius:3px;box-shadow:0 2px 2px #ccc"><div class="t" style="left:8px;top:6px;font-size:11px">Project Name</div><div class="a" style="left:8px;top:28px;width:136px;height:75px;border:1px solid #ccc;font-size:8px;line-height:12px;padding:5px 3px">Description of the Project or Event that was hosted by this Organization.</div></div>
 <div class="a" style="left:604px;top:444px;width:154px;height:115px;border:1px solid #ccc;border-radius:3px;box-shadow:0 2px 2px #ccc"><div class="t" style="left:8px;top:6px;font-size:11px">Project Name</div><div class="a" style="left:8px;top:28px;width:136px;height:75px;border:1px solid #ccc;font-size:8px;line-height:12px;padding:5px 3px">Description of the Project or Event that was hosted by this Organization.</div></div>
 <div class="a" style="left:38px;top:590px;width:154px;height:114px;border:1px solid #ccc;border-radius:3px;box-shadow:0 2px 2px #ccc"><div class="t" style="left:8px;top:6px;font-size:11px">Project Name</div><div class="a" style="left:8px;top:28px;width:136px;height:75px;border:1px solid #ccc;font-size:8px;line-height:12px;padding:5px 3px">Description of the Project or Event that was hosted by this Organization.</div></div>
 <div class="a" style="left:228px;top:590px;width:154px;height:114px;border:1px solid #ccc;border-radius:3px;box-shadow:0 2px 2px #ccc"><div class="t" style="left:8px;top:6px;font-size:11px">Project Name</div><div class="a" style="left:8px;top:28px;width:136px;height:75px;border:1px solid #ccc;font-size:8px;line-height:12px;padding:5px 3px">Description of the Project or Event that was hosted by this Organization.</div></div>
 <div class="a" style="left:818px;top:530px;width:2px;height:50px;background:#aaa"></div>
</div>
<div class="lab" style="left:1717px;top:1936px;width:177px;height:51px;line-height:51px">Profile - 1</div>

<!-- FORM 2 -->
<div class="card" style="left:118px;top:2485px;width:827px;height:690px">
 <div class="nb" style="left:33px;top:18px;font-size:22px">NBJC</div>
 <div class="t" style="left:104px;top:62px;font-size:13px;font-weight:bold">Organization Sign Up</div>
 <div class="a" style="left:86px;top:105px;width:655px;height:570px;border:1px solid #aaa">
  <div class="a" style="left:0;top:0;width:655px;height:22px;border-bottom:1px solid #aaa"></div>
  <div class="a" style="left:207px;top:0;height:22px;border-left:1px solid #aaa"></div>
  <div class="a" style="left:436px;top:0;height:22px;border-left:1px solid #aaa"></div>
  <div class="t" style="left:14px;top:4px;font-size:11px">Basics</div>
  <div class="t" style="left:222px;top:3px;font-size:11px">Projects &amp; Events</div>
  <div class="t" style="left:457px;top:3px;font-size:11px">Short Response</div>
 </div>
 <div class="t" style="left:121px;top:153px;font-size:9px;color:#555">Organization Name</div><div class="t" style="left:405px;top:153px;font-size:9px;color:#555">Type of Organization</div><div class="t" style="left:569px;top:153px;font-size:9px;color:#555">Type of Work</div>
 <div class="inp" style="left:121px;top:170px;width:257px;height:26px">Your Organization Name</div>
 <div class="inp" style="left:405px;top:170px;width:138px;height:26px">Select One<span class="chev"></span></div>
 <div class="inp" style="left:569px;top:170px;width:138px;height:26px">Select One<span class="chev"></span></div>
 <div class="t" style="left:121px;top:223px;font-size:9px;color:#555">Contact Person - Name</div><div class="t" style="left:312px;top:223px;font-size:9px;color:#555">Contact Person - Email</div><div class="t" style="left:508px;top:223px;font-size:9px;color:#555">Current Website</div>
 <div class="inp" style="left:121px;top:240px;width:165px;height:26px">Name</div>
 <div class="inp" style="left:312px;top:240px;width:171px;height:26px">Email</div>
 <div class="inp" style="left:508px;top:240px;width:199px;height:26px">URL</div>
 <div class="t" style="left:121px;top:291px;font-size:9px;color:#555">Location Type</div><div class="t" style="left:267px;top:291px;font-size:9px;color:#555">Organization Address</div>
 <div class="inp" style="left:121px;top:308px;width:118px;height:26px">HQ / Branch<span class="chev"></span></div>
 <div class="inp" style="left:267px;top:308px;width:138px;height:26px">Street</div>
 <div class="inp" style="left:428px;top:308px;width:106px;height:26px">City</div>
 <div class="inp" style="left:558px;top:308px;width:67px;height:26px">State<span class="chev"></span></div>
 <div class="inp" style="left:649px;top:308px;width:58px;height:26px">Zip</div>
 <div class="t" style="left:121px;top:362px;font-size:9px;color:#555">Audience and Demographics</div><div class="t" style="left:517px;top:362px;font-size:9px;color:#555">EIN</div>
 <div class="inp" style="left:121px;top:381px;width:129px;height:26px">Add LGBTQ<span class="chev"></span></div>
 <div class="inp" style="left:121px;top:425px;width:129px;height:26px">Add Backgrounds<span class="chev"></span></div>
 <div class="inp" style="left:121px;top:468px;width:129px;height:26px">Add Ages<span class="chev"></span></div>
 <div class="inp" style="left:276px;top:381px;width:197px;height:113px;font-size:10px">Other (Type + Hit <b>Enter</b>)</div>
 <div class="inp" style="left:517px;top:381px;width:190px;height:26px">Employer Identification #</div>
 <div class="t" style="left:517px;top:431px;font-size:9px;color:#555">Date of Founding</div>
 <div class="inp" style="left:517px;top:450px;width:116px;height:26px">__/__/____</div>
 <div class="t" style="left:121px;top:519px;font-size:9px;color:#555">Mission and History</div><div class="t" style="left:421px;top:519px;font-size:9px;color:#555">Key Values</div>
 <div class="inp" style="left:121px;top:535px;width:274px;height:112px;white-space:normal;line-height:14px">Describe your organization's primary mission, and some of your history.</div>
 <div class="inp" style="left:421px;top:535px;width:284px;height:114px;white-space:normal;line-height:14px">Describe your organization's key values, and a short explanation of them.</div>
 <div class="btn" style="left:634px;top:685px;width:58px;height:16px;background:#999"></div>
</div>
<div class="lab" style="left:45px;top:2549px;width:157px;height:50px;line-height:50px">Form - 2</div>

<!-- PROFILE 2 -->
<div class="card" style="left:1008px;top:2599px;width:827px;height:730px">
 <div class="nb" style="left:7px;top:14px">NBJC</div>
 <div class="a" style="left:84px;top:3px;width:300px;height:27px;border:1px solid #ddd;font-size:10px;color:#aaa;padding:7px 27px">Look for an Organization</div>
 <div class="t" style="left:590px;top:12px;font-size:10px">Map</div><div class="t" style="left:668px;top:12px;font-size:10px">Profile</div>
 <div class="btn" style="left:720px;top:6px;width:101px;height:20px;background:#999;color:#eee;line-height:20px">Organization</div>
 <div class="a" style="left:58px;top:62px;width:352px;height:146px;background:#e9e8ec;border-radius:6px"></div>
 <div class="a" style="left:420px;top:62px;width:350px;height:146px;background:#e9e8ec;border-radius:6px"></div>
 <div class="pill" style="left:726px;top:228px;font-size:9px;color:#999;border-color:#ccc">Edit</div>
 <div class="t" style="left:57px;top:258px;font-size:22px;font-weight:bold;color:#333">Organization Name</div>
 <div class="t" style="left:58px;top:285px;font-size:12px">Type of Work • Type of Org</div>
 <div class="a" style="left:316px;top:262px;width:225px;height:26px;background:#a993c8;border-radius:5px;color:#f3f0fa;font-size:11px;text-align:center;line-height:26px">Information</div>
 <div class="a" style="left:541px;top:262px;width:229px;height:26px;background:#f3f0fc;border-radius:0 5px 5px 0;color:#8a6cbf;font-size:11px;text-align:center;line-height:26px">Projects &amp; Events</div>
 <div class="t" style="left:58px;top:325px;font-size:12px;font-weight:bold">Location</div>
 <div class="t" style="left:58px;top:350px;font-size:10px"><b>Type:</b> Headquarters</div>
 <div class="t" style="left:58px;top:373px;font-size:10px">123 Street Name</div>
 <div class="t" style="left:58px;top:396px;font-size:10px">City, State 12345</div>
 <div class="t" style="left:58px;top:434px;font-size:12px;font-weight:bold">Basics</div>
 <div class="t" style="left:58px;top:456px;font-size:10px"><b>Site:</b> currentwebsite.org</div>
 <div class="t" style="left:58px;top:480px;font-size:10px"><b>EIN:</b> 12345480854302</div>
 <div class="t" style="left:58px;top:505px;font-size:10px"><b>Founded:</b> MM/DD/YYYY</div>
 <div class="t" style="left:58px;top:545px;font-size:12px;font-weight:bold">Point of Contact</div>
 <div class="t" style="left:58px;top:568px;font-size:10px"><b>Name:</b> First Andlast</div>
 <div class="t" style="left:58px;top:591px;font-size:10px"><b>Phone:</b> 123-456-7890</div>
 <div class="t" style="left:58px;top:614px;font-size:10px"><b>Email:</b> email@example.com</div>
 <div class="t" style="left:316px;top:327px;font-size:12px;font-weight:bold">Audience Demographics</div>
 <div class="t" style="left:316px;top:352px;font-size:6px;color:#777">Orientation</div><div class="t" style="left:470px;top:352px;font-size:6px;color:#777">Background</div><div class="t" style="left:669px;top:352px;font-size:6px;color:#777">Age Range</div>
 <div class="pill" style="left:316px;top:372px;font-size:7px;padding:1px 4px">LGBTQ+</div><div class="pill" style="left:371px;top:372px;font-size:7px;padding:1px 4px">SGL</div>
 <div class="pill" style="left:470px;top:372px;font-size:7px;padding:1px 4px">POC</div><div class="pill" style="left:508px;top:372px;font-size:7px;padding:1px 4px">Black</div><div class="pill" style="left:555px;top:372px;font-size:7px;padding:1px 4px">Latinx</div>
 <div class="pill" style="left:669px;top:372px;font-size:7px;padding:1px 4px">All Ages</div>
 <div class="t" style="left:316px;top:428px;font-size:12px;font-weight:bold">Our Mission</div>
 <div class="a" style="left:316px;top:447px;width:456px;font-size:7.6px;color:#555;line-height:12.3px">Long description about my organization's mission and history. Lorem ipsum dolor sit amet, consectetur adipiscing elit, sed do eiusmod tempor incididunt ut labore et dolore magna aliqua. Ut porttitor leo a diam sollicitudin tempor id. Sem nulla pharetra diam sit amet nisl. Neque aliquam vestibulum morbi blandit cursus risus at. Luctus accumsan tortor posuere ac ut consequat. Turpis tincidunt id aliquet risus feugiat in ante metus dictum. Vulputate sapien nec sagittis aliquam malesuada bibendum arcu. Vitae congue mauris rhoncus aenean vel elit scelerisque. Ullamcorper velit sed ullamcorper morbi. Quam viverra orci sagittis eu volutpat odio. Elementum nisi quis eleifend quam. Sed vulputate odio ut enim blandit volutpat maecenas volutpat. Justo laoreet sit amet cursus sit amet.</div>
 <div class="t" style="left:316px;top:586px;font-size:12px;font-weight:bold">Our History</div>
 <div class="a" style="left:316px;top:604px;width:456px;font-size:7.6px;color:#555;line-height:12.3px">Long description about my organization's mission and history. Lorem ipsum dolor sit amet, consectetur adipiscing elit, sed do eiusmod tempor incididunt ut labore et dolore magna aliqua. Ut porttitor leo a diam sollicitudin tempor id. Sem nulla pharetra diam sit amet nisl. Neque aliquam vestibulum morbi blandit cursus risus at. Luctus accumsan tortor posuere ac ut consequat. Turpis tincidunt id aliquet risus feugiat in ante metus dictum. Vulputate sapien nec sagittis aliquam malesuada bibendum arcu. Vitae congue mauris rhoncus aenean vel elit scelerisque. Ullamcorper velit sed ullamcorper morbi. Quam viverra orci sagittis eu volutpat odio. Elementum nisi quis eleifend quam. Sed vulputate odio ut enim blandit volutpat maecenas volutpat. Justo laoreet sit amet cursus sit amet.</div>
</div>
<div class="lab" style="left:1708px;top:2703px;width:180px;height:52px;line-height:52px">Profile - 2</div>

<!-- FORM 3 -->
<div class="card" style="left:118px;top:3203px;width:827px;height:653px">
 <div class="nb" style="left:2px;top:8px;font-size:24px">NBJC</div>
 <div class="t" style="left:85px;top:46px;font-size:18px;font-weight:bold">Organization Application</div>
 <div class="a" style="left:80px;top:82px;width:726px;height:522px;border:1px solid #aaa">
  <div class="a" style="left:0;top:0;width:726px;height:27px;border-bottom:1px solid #aaa"></div>
  <div class="a" style="left:231px;top:0;height:27px;border-left:1px solid #aaa"></div>
  <div class="a" style="left:484px;top:0;height:27px;border-left:1px solid #aaa"></div>
  <div class="t" style="left:28px;top:6px;font-size:14px">Basics</div>
  <div class="t" style="left:251px;top:5px;font-size:14px">Projects &amp; Events</div>
  <div class="t" style="left:507px;top:5px;font-size:14px">Short Response</div>
  <div class="t" style="left:5px;top:38px;font-size:6px;color:#a38cd6">44px</div>
  <div class="a" style="left:713px;top:440px;width:2px;height:62px;background:#aaa"></div>
 </div>
 <div class="t" style="left:159px;top:157px;font-size:11px;color:#444">Organization Name</div><div class="inp" style="left:330px;top:150px;width:394px;height:31px;padding:10px 8px">Your Organization Name</div>
 <div class="a" style="left:587px;top:158px;width:10px;height:13px;border-radius:50%;background:#445"></div>
 <div class="t" style="left:159px;top:214px;font-size:11px;color:#444">Type of Work</div><div class="inp" style="left:330px;top:207px;width:394px;height:31px;padding:10px 8px">Select One<span class="chev" style="top:8px;width:9px;height:9px"></span></div>
 <div class="t" style="left:159px;top:271px;font-size:11px;color:#444">Type of Organization</div><div class="inp" style="left:330px;top:264px;width:394px;height:31px;padding:10px 8px">Select One<span class="chev" style="top:8px;width:9px;height:9px"></span></div>
 <div class="t" style="left:159px;top:329px;font-size:11px;color:#444">Contact Person Name</div><div class="inp" style="left:330px;top:322px;width:394px;height:31px;padding:10px 8px">Your Organization Name</div>
 <div class="t" style="left:159px;top:386px;font-size:11px;color:#444">Contact Person Email</div><div class="inp" style="left:330px;top:379px;width:394px;height:31px;padding:10px 8px">Your Organization Name</div>
 <div class="t" style="left:159px;top:443px;font-size:11px;color:#444">Current Website</div><div class="inp" style="left:330px;top:436px;width:394px;height:31px;padding:10px 8px">Your Organization Name</div>
 <div class="t" style="left:159px;top:501px;font-size:11px;color:#444">Type of Organization</div><div class="inp" style="left:330px;top:494px;width:394px;height:31px;padding:10px 8px">Select One<span class="chev" style="top:8px;width:9px;height:9px"></span></div>
 <div class="t" style="left:159px;top:558px;font-size:11px;color:#444">Location Type</div><div class="inp" style="left:330px;top:551px;width:394px;height:31px;padding:10px 8px">Your Organization Name</div>
 <div class="btn" style="left:600px;top:620px;width:89px;height:23px;border:1px solid #bbb;color:#777;font-size:11px;line-height:21px">Save Draft</div>
 <div class="btn" style="left:710px;top:620px;width:67px;height:23px;background:#999;color:#eee;font-size:11px;line-height:23px">Submit</div>
</div>
<div class="lab" style="left:45px;top:3253px;width:158px;height:52px;line-height:52px">Form - 3</div>

</body></html>
